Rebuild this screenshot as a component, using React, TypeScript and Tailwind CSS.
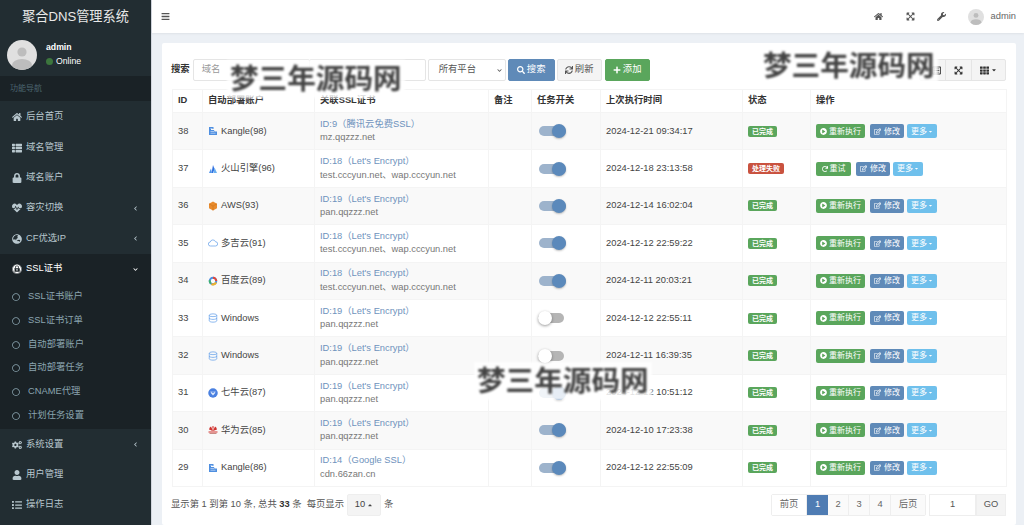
import React from "react";
import {
  FaHome, FaList, FaThList, FaLock, FaHeartbeat, FaGlobeAsia, FaChevronLeft, FaChevronDown, FaCogs, FaUser,
  FaBars, FaExpandArrowsAlt, FaWrench, FaSearch, FaSync, FaPlus, FaRegEdit, FaPlayCircle, FaRedo, FaTh,
  FaCaretDown, FaCaretUp, FaRegCircle, FaExpeditedssl, FaRegListAlt,
} from "react-icons/fa";

const font = { fontFamily: '"Liberation Sans","Noto Sans CJK SC",sans-serif' };

function Avatar({ size }: { size: number }) {
  return (
    <svg width={size} height={size} viewBox="0 0 30 30" className="shrink-0">
      <defs>
        <clipPath id={`av${size}`}><circle cx="15" cy="15" r="15" /></clipPath>
      </defs>
      <circle cx="15" cy="15" r="15" fill="#e0e0e0" />
      <g clipPath={`url(#av${size})`} fill="#bdbdbd">
        <circle cx="15" cy="12" r="4.6" />
        <ellipse cx="15" cy="25" rx="10" ry="6" />
      </g>
    </svg>
  );
}

function NavItem({ icon, label, arrow, active }: { icon: React.ReactNode; label: string; arrow?: "l" | "d"; active?: boolean }) {
  return (
    <div className={`flex items-center h-[30.4px] pl-3 pr-[12px] text-[9.33px] ${active ? "text-white" : "text-[#b8c7ce]"}`}>
      <span className="w-[14px] flex justify-start text-[10px]">{icon}</span>
      <span className="flex-1">{label}</span>
      {arrow === "l" && <FaChevronLeft className="text-[5px] mr-[1px]" />}
      {arrow === "d" && <FaChevronDown className="text-[5px] mr-[1px]" />}
    </div>
  );
}

function SubItem({ label }: { label: string }) {
  return (
    <div className="flex items-center h-[23.7px] pl-3 text-[9.33px] text-[#8aa4af]">
      <FaRegCircle className="text-[8px] mr-[8px]" />
      <span>{label}</span>
    </div>
  );
}

function Sidebar() {
  return (
    <aside className="w-[151px] shrink-0 bg-[#222d32] flex flex-col h-[525px] overflow-hidden">
      <div className="h-[33px] flex items-center justify-center text-[#e8e8e8] text-[13.15px] bg-[#222d32]">聚合DNS管理系统</div>
      <div className="h-[43px] flex items-center pl-[7px] gap-[9px]">
        <Avatar size={30} />
        <div className="flex flex-col gap-[3px] text-white">
          <span className="text-[8.7px] font-bold leading-[11px]">admin</span>
          <span className="flex items-center text-[8.7px] leading-[11px]">
            <span className="w-[7px] h-[7px] rounded-full bg-[#3c763d] mr-[3px]" />Online
          </span>
        </div>
      </div>
      <div className="h-[25px] bg-[#1a2226] text-[#4b646f] text-[8px] flex items-center pl-[10px]">功能导航</div>
      <div className="pt-[1px]">
        <NavItem icon={<FaHome />} label="后台首页" />
        <NavItem icon={<FaThList />} label="域名管理" />
        <NavItem icon={<FaLock />} label="域名账户" />
        <NavItem icon={<FaHeartbeat />} label="容灾切换" arrow="l" />
        <NavItem icon={<FaGlobeAsia />} label="CF优选IP" arrow="l" />
      </div>
      <div className="bg-[#1a2226] pb-[2px]">
        <NavItem icon={<FaExpeditedssl />} label="SSL证书" arrow="d" active />
        <div className="mt-[1px]">
          <SubItem label="SSL证书账户" />
          <SubItem label="SSL证书订单" />
          <SubItem label="自动部署账户" />
          <SubItem label="自动部署任务" />
          <SubItem label="CNAME代理" />
          <SubItem label="计划任务设置" />
        </div>
      </div>
      <NavItem icon={<FaCogs />} label="系统设置" arrow="l" />
      <NavItem icon={<FaUser />} label="用户管理" />
      <NavItem icon={<FaList />} label="操作日志" />
    </aside>
  );
}

function PlatIcon({ k }: { k: string }) {
  const c = "shrink-0 mr-[3px]";
  const s = { width: 10, height: 10, viewBox: "0 0 20 20", className: c };
  switch (k) {
    case "kangle":
      return (
        <svg {...s}>
          <path d="M2 2h9v4H6v2h6l1 3h5v7H2z" fill="#4f8fe0" />
          <path d="M5 5h4M5 11h7M5 14.5h10" stroke="#d5e5fa" strokeWidth="1.3" />
        </svg>
      );
    case "volc":
      return (
        <svg {...s}>
          <path d="M10 2l3 8-3 8H7z" fill="#2f6fe0" />
          <path d="M13 7l5 11h-7z" fill="#6ab0f0" />
          <path d="M6 9l2 9H2z" fill="#4f94ec" />
        </svg>
      );
    case "aws":
      return (
        <svg {...s}>
          <path d="M10 1l8 4.5v9L10 19l-8-4.5v-9z" fill="#e88b2d" />
          <path d="M2 5.5L10 10l8-4.5" stroke="#c96f14" strokeWidth="1" fill="none" />
          <path d="M10 10v9" stroke="#c96f14" strokeWidth="1" />
        </svg>
      );
    case "cloud":
      return (
        <svg {...s}>
          <path d="M5 16a4 4 0 0 1-.5-8A5.5 5.5 0 0 1 15 7.5 4.2 4.2 0 0 1 15 16z" fill="none" stroke="#5b9be8" strokeWidth="1.4" />
        </svg>
      );
    case "baidu":
      return (
        <svg {...s}>
          <circle cx="10" cy="10" r="6.5" fill="none" stroke="#4f8fe0" strokeWidth="4" />
          <path d="M10 3.5A6.5 6.5 0 0 1 16.5 10" fill="none" stroke="#e0473a" strokeWidth="4" />
          <path d="M16 13a6.5 6.5 0 0 1-9 3" fill="none" stroke="#f0b429" strokeWidth="4" />
          <path d="M5.5 15A6.5 6.5 0 0 1 3.6 8.5" fill="none" stroke="#3fb36b" strokeWidth="4" />
        </svg>
      );
    case "db":
      return (
        <svg {...s}>
          <ellipse cx="10" cy="4.5" rx="7.5" ry="2.8" fill="none" stroke="#5b9be8" strokeWidth="1.4" />
          <path d="M2.5 4.5v11c0 1.6 3.4 2.8 7.5 2.8s7.5-1.2 7.5-2.8v-11M2.5 10c0 1.6 3.4 2.8 7.5 2.8s7.5-1.2 7.5-2.8" fill="none" stroke="#5b9be8" strokeWidth="1.4" />
        </svg>
      );
    case "qiniu":
      return (
        <svg {...s}>
          <circle cx="10" cy="10" r="9.5" fill="#4a80e0" />
          <path d="M5 6.5c3 1.5 7 1.5 10 0l-1 4-4 4.5-4-4.5z" fill="#dbe7fb" />
          <path d="M7.5 9h5" stroke="#4a80e0" strokeWidth="1.4" />
        </svg>
      );
    default:
      return (
        <svg {...s}>
          <path d="M10 12L6 3 3.5 5 2 9zM10 12l4-9 2.5 2L18 9zM10 12L8.5 2.5h3z" fill="#d0312d" />
          <path d="M1 13h18v2H1z" fill="#d0312d" />
          <path d="M3 16h14v2H3z" fill="#c98c86" />
        </svg>
      );
  }
}

type Row = { id: number; icon: string; acct: string; cert: string; dom: string; on: boolean; time: string; fail?: boolean };
const rows: Row[] = [
  { id: 38, icon: "kangle", acct: "Kangle(98)", cert: "ID:9（腾讯云免费SSL）", dom: "mz.qqzzz.net", on: true, time: "2024-12-21 09:34:17" },
  { id: 37, icon: "volc", acct: "火山引擎(96)", cert: "ID:18（Let's Encrypt）", dom: "test.cccyun.net、wap.cccyun.net", on: true, time: "2024-12-18 23:13:58", fail: true },
  { id: 36, icon: "aws", acct: "AWS(93)", cert: "ID:19（Let's Encrypt）", dom: "pan.qqzzz.net", on: true, time: "2024-12-14 16:02:04" },
  { id: 35, icon: "cloud", acct: "多吉云(91)", cert: "ID:18（Let's Encrypt）", dom: "test.cccyun.net、wap.cccyun.net", on: true, time: "2024-12-12 22:59:22" },
  { id: 34, icon: "baidu", acct: "百度云(89)", cert: "ID:18（Let's Encrypt）", dom: "test.cccyun.net、wap.cccyun.net", on: true, time: "2024-12-11 20:03:21" },
  { id: 33, icon: "db", acct: "Windows", cert: "ID:19（Let's Encrypt）", dom: "pan.qqzzz.net", on: false, time: "2024-12-12 22:55:11" },
  { id: 32, icon: "db", acct: "Windows", cert: "ID:19（Let's Encrypt）", dom: "pan.qqzzz.net", on: false, time: "2024-12-11 16:39:35" },
  { id: 31, icon: "qiniu", acct: "七牛云(87)", cert: "ID:19（Let's Encrypt）", dom: "pan.qqzzz.net", on: true, time: "2024-12-12 10:51:12" },
  { id: 30, icon: "huawei", acct: "华为云(85)", cert: "ID:19（Let's Encrypt）", dom: "pan.qqzzz.net", on: true, time: "2024-12-10 17:23:38" },
  { id: 29, icon: "kangle", acct: "Kangle(86)", cert: "ID:14（Google SSL）", dom: "cdn.66zan.cn", on: true, time: "2024-12-12 22:55:09" },
];

function Toggle({ on }: { on: boolean }) {
  return on ? (
    <div className="relative w-[27px] h-[14px] flex items-center ml-[2px]">
      <div className="w-full h-[10px] rounded-full bg-[#9db3cc]" />
      <div className="absolute right-0 top-0 w-[14px] h-[14px] rounded-full bg-[#5b89bb] shadow-[0_1px_2px_rgba(0,0,0,0.25)]" />
    </div>
  ) : (
    <div className="relative w-[26px] h-[14px] flex items-center ml-[1px]">
      <div className="w-full h-[10px] rounded-full bg-[#b5b5b5]" />
      <div className="absolute left-0 top-0 w-[14px] h-[14px] rounded-full bg-white shadow-[0_1px_3px_rgba(0,0,0,0.4)]" />
    </div>
  );
}

function Xs({ cls, children }: { cls: string; children: React.ReactNode }) {
  return (
    <span className={`inline-flex items-center h-[14px] px-[4px] rounded-[2px] text-white text-[8px] whitespace-nowrap ${cls}`}>
      {children}
    </span>
  );
}

const th = "border border-[#f4f4f4] px-[5px] text-left font-bold text-[9.33px] text-[#333]";
const td = "border border-[#f4f4f4] px-[5px] text-[9.33px] text-[#444] leading-[13.3px] align-middle";

function Table() {
  return (
    <table className="w-[834px] border-collapse table-fixed">
      <colgroup>
        <col className="w-[30px]" />
        <col className="w-[112px]" />
        <col className="w-[174px]" />
        <col className="w-[43px]" />
        <col className="w-[69px]" />
        <col className="w-[142px]" />
        <col className="w-[68px]" />
        <col className="w-[196px]" />
      </colgroup>
      <thead>
        <tr className="h-[23px]">
          {["ID", "自动部署账户", "关联SSL证书", "备注", "任务开关", "上次执行时间", "状态", "操作"].map((h) => (
            <th key={h} className={th}>{h}</th>
          ))}
        </tr>
      </thead>
      <tbody>
        {rows.map((r, i) => (
          <tr key={r.id} className={`h-[37.4px] ${i % 2 === 0 ? "bg-[#f9f9f9]" : "bg-white"}`}>
            <td className={td}>{r.id}</td>
            <td className={td}>
              <span className="flex items-center whitespace-nowrap"><PlatIcon k={r.icon} />{r.acct}</span>
            </td>
            <td className={`${td} whitespace-nowrap`}>
              <div className="text-[#6f93bd]">{r.cert}</div>
              <div className="text-[#777]">{r.dom}</div>
            </td>
            <td className={td}></td>
            <td className={td}><Toggle on={r.on} /></td>
            <td className={td}>{r.time}</td>
            <td className={td}>
              <span className={`inline-flex items-center h-[11px] px-[4px] rounded-[2px] text-white text-[7px] font-bold ${r.fail ? "bg-[#c9523f]" : "bg-[#5aa65c]"}`}>
                {r.fail ? "处理失败" : "已完成"}
              </span>
            </td>
            <td className={`${td} whitespace-nowrap`}>
              <div className="flex items-center">
                {r.fail ? (
                  <Xs cls="bg-[#5aa65c] mr-[5px] w-[35px] justify-center"><FaRedo className="text-[6px] mr-[2px]" />重试</Xs>
                ) : (
                  <Xs cls="bg-[#5aa65c] mr-[5px]"><FaPlayCircle className="text-[7px] mr-[2px]" />重新执行</Xs>
                )}
                <Xs cls="bg-[#5f8ab8] mr-[3px]"><FaRegEdit className="text-[7px] mr-[3px]" />修改</Xs>
                <Xs cls="bg-[#6fc0ec]">更多<FaCaretDown className="text-[5px] ml-[1px]" /></Xs>
              </div>
            </td>
          </tr>
        ))}
      </tbody>
    </table>
  );
}

function Watermark({ pos }: { pos: string }) {
  return (
    <div className={`absolute ${pos} bg-white/85 px-[3px] text-[28.6px] leading-[38px] font-bold text-[#444] whitespace-nowrap blur-[0.8px]`}>
      梦三年源码网
    </div>
  );
}

const box = "h-[22px] border border-[#e5e5e5] rounded-[2px] bg-white text-[9.33px] flex items-center";

export default function App() {
  return (
    <div className="relative flex w-[1024px] h-[525px] overflow-hidden bg-[#ecf0f5]" style={font}>
      <Sidebar />
      <main className="flex-1 min-w-0 flex flex-col border-l border-[#d2d6de]">
        <header className="h-[33px] bg-white flex items-center justify-between pl-[9px] pr-[8px] text-[#555] shadow-[0_1px_2px_rgba(0,0,0,0.06)]">
          <FaBars className="text-[9px]" />
          <div className="flex items-center">
            <FaHome className="text-[9px] mr-[23px]" />
            <FaExpandArrowsAlt className="text-[9px] mr-[22px]" />
            <FaWrench className="text-[9px] mr-[22px]" />
            <Avatar size={16} />
            <span className="ml-[7px] text-[9.33px] text-[#666]">admin</span>
          </div>
        </header>
        <section className="mt-[10px] ml-[10px] mr-[8px] bg-white rounded-[2px] h-[482px] px-[10px] pt-[16px]">
          <div className="flex items-center h-[22px]">
            <span className="text-[9.33px] font-bold text-[#333] mr-[3px] -ml-[1px]">搜索</span>
            <div className={`${box} w-[117px] px-[8px] text-[#999]`}>域名</div>
            <div className={`${box} w-[117px] -ml-px mr-[2px]`} />
            <div className={`${box} w-[78px] pl-[10px] pr-[3px] text-[#555] justify-between mr-[2px]`}>
              所有平台<FaChevronDown className="text-[5px] text-[#555]" />
            </div>
            <div className={`${box} !bg-[#5f8ab8] !border-[#5f8ab8] text-white w-[47px] justify-center mr-[2px]`}>
              <FaSearch className="text-[8px] mr-[2px]" />搜索
            </div>
            <div className={`${box} !bg-[#f4f4f4] text-[#555] w-[45px] justify-center mr-[3px]`}>
              <FaSync className="text-[8px] mr-[2px]" />刷新
            </div>
            <div className={`${box} !bg-[#5aa65c] !border-[#5aa65c] text-white w-[45px] justify-center`}>
              <FaPlus className="text-[8px] mr-[2px]" />添加
            </div>
            <div className="flex-1" />
            <div className="flex h-[22px] border border-[#e5e5e5] rounded-[2px] bg-[#f4f4f4] text-[#333]">
              <div className="w-[26px] flex items-center justify-end pr-[4px] border-r border-[#e5e5e5]"><FaRegListAlt className="text-[9px]" /></div>
              <div className="w-[26px] flex items-center justify-center border-r border-[#e5e5e5]"><FaExpandArrowsAlt className="text-[9px]" /></div>
              <div className="w-[33px] flex items-center justify-center"><FaTh className="text-[9px]" /><FaCaretDown className="text-[6px] ml-[2px]" /></div>
            </div>
          </div>
          <div className="mt-[8px]"><Table /></div>
          <div className="flex items-center justify-between mt-[7px] text-[9.33px] text-[#555] h-[22px]">
            <div className="flex items-center whitespace-nowrap -ml-[1px]">
              <span>显示第 1 到第 10 条, 总共 <b className="text-[#333]">33</b> 条</span>
              <span className="ml-[5px]">每页显示</span>
              <span className="mx-[3px] inline-flex items-center h-[22px] w-[34px] justify-center bg-[#f4f4f4] border border-[#eee] rounded-[2px] text-[#444]">10<FaCaretUp className="text-[6px] ml-[2px]" /></span>
              <span>条</span>
            </div>
            <div className="flex items-center">
              <div className="flex h-[22px] border border-[#eee] rounded-[2px] text-[#666]">
                <span className="w-[35px] flex items-center justify-center bg-white border-r border-[#eee]">前页</span>
                <span className="w-[21px] flex items-center justify-center bg-[#4f7cb3] text-white">1</span>
                <span className="w-[21px] flex items-center justify-center bg-[#fafafa] border-r border-[#eee]">2</span>
                <span className="w-[21px] flex items-center justify-center bg-[#fafafa] border-r border-[#eee]">3</span>
                <span className="w-[21px] flex items-center justify-center bg-[#fafafa] border-r border-[#eee]">4</span>
                <span className="w-[34px] flex items-center justify-center bg-[#fafafa]">后页</span>
              </div>
              <div className="flex h-[22px] ml-[3px]">
                <span className="w-[47px] flex items-center justify-center bg-white border border-[#eee] text-[#555]">1</span>
                <span className="w-[30px] flex items-center justify-center bg-[#f4f4f4] border border-[#eee] text-[#555]">GO</span>
              </div>
            </div>
          </div>
        </section>
      </main>
      <Watermark pos="left-[227px] top-[60px]" />
      <Watermark pos="left-[760px] top-[47px]" />
      <Watermark pos="left-[474px] top-[362px]" />
    </div>
  );
}
